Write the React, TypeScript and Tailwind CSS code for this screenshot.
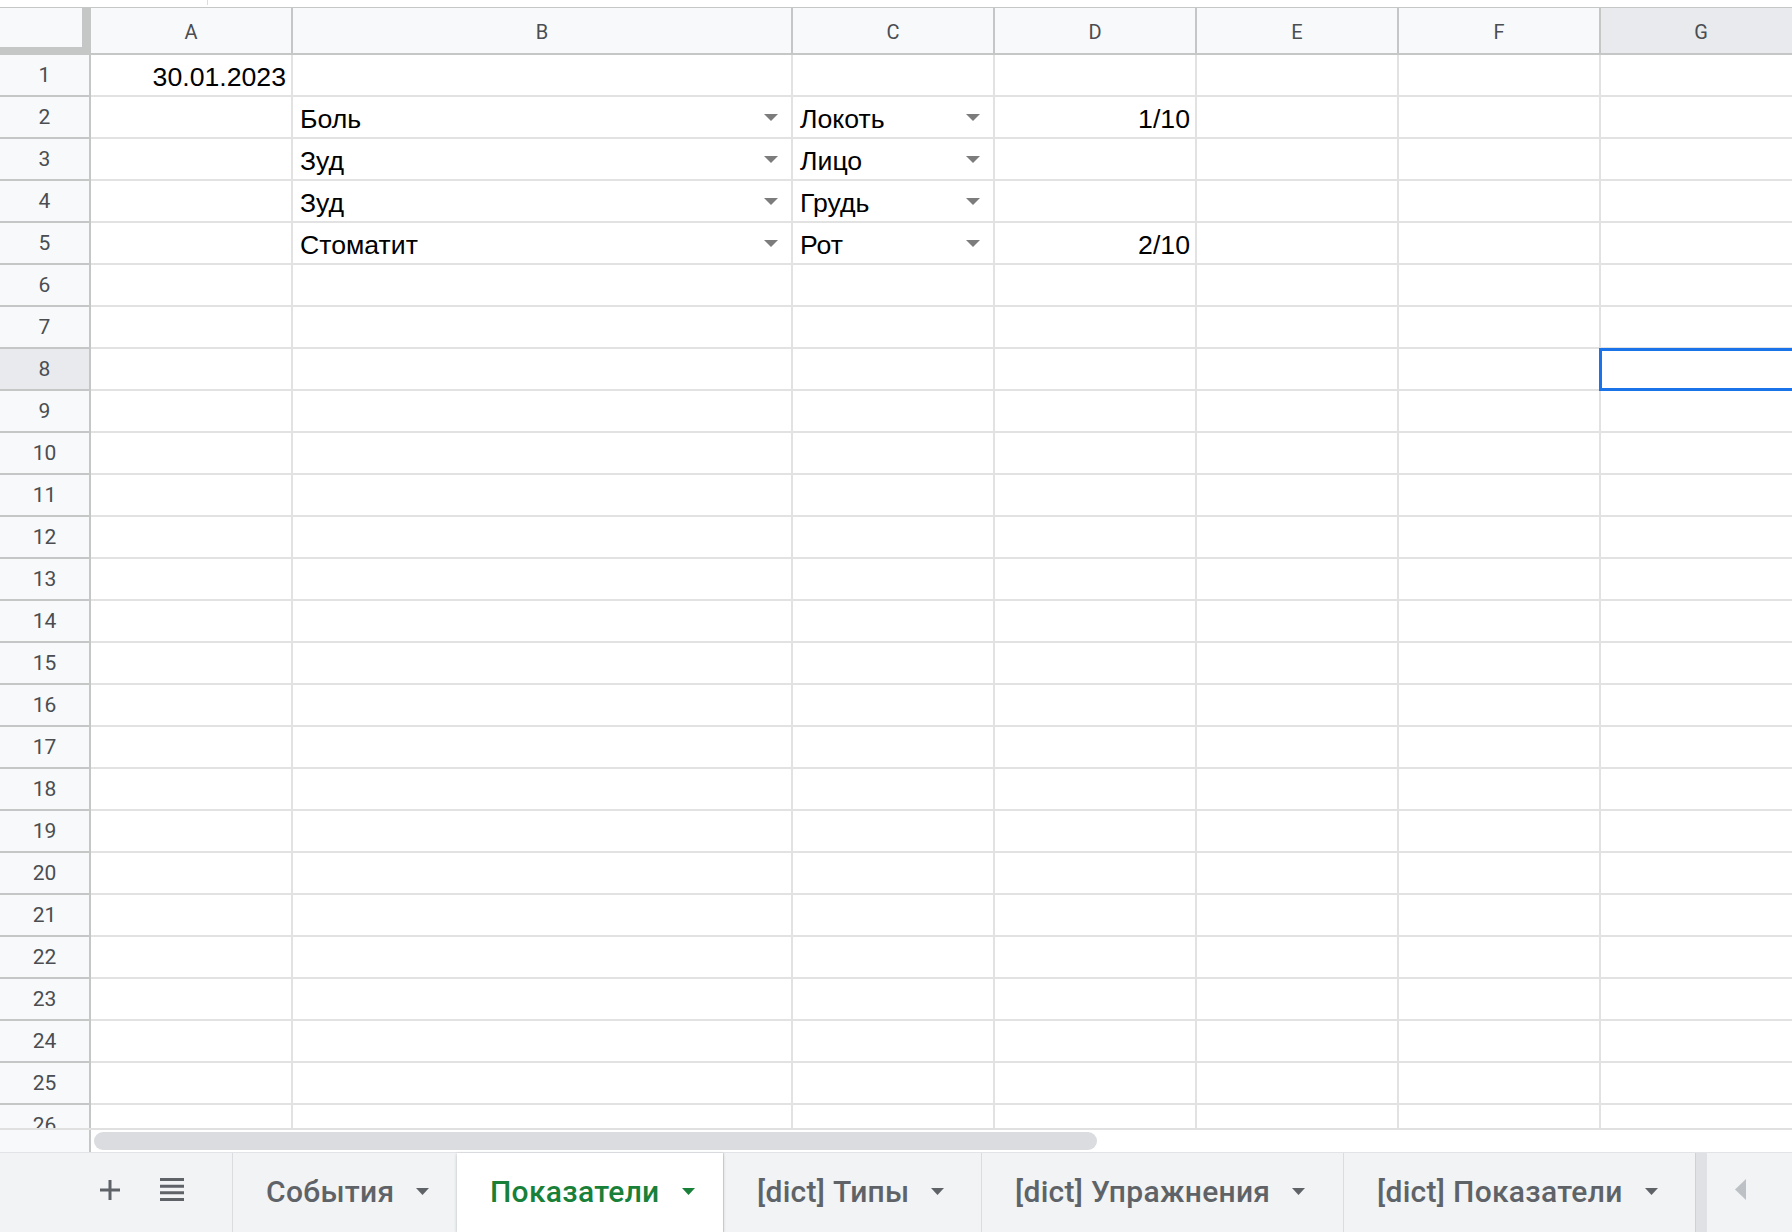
import React from "react";

const COLUMNS = [
  { id: "A", width: "w-[202px]" },
  { id: "B", width: "w-[500px]" },
  { id: "C", width: "w-[202px]" },
  { id: "D", width: "w-[202px]" },
  { id: "E", width: "w-[202px]" },
  { id: "F", width: "w-[202px]" },
  { id: "G", width: "w-[202px]" },
] as const;

type Cell = { text: string; align?: "left" | "right"; dropdown?: boolean };

const DATA: Record<number, Partial<Record<string, Cell>>> = {
  1: { A: { text: "30.01.2023", align: "right" } },
  2: {
    B: { text: "Боль", dropdown: true },
    C: { text: "Локоть", dropdown: true },
    D: { text: "1/10", align: "right" },
  },
  3: { B: { text: "Зуд", dropdown: true }, C: { text: "Лицо", dropdown: true } },
  4: { B: { text: "Зуд", dropdown: true }, C: { text: "Грудь", dropdown: true } },
  5: {
    B: { text: "Стоматит", dropdown: true },
    C: { text: "Рот", dropdown: true },
    D: { text: "2/10", align: "right" },
  },
};

const TABS = [
  { label: "События", width: "w-[225px]" },
  { label: "Показатели", width: "w-[266px]", active: true },
  { label: "[dict] Типы", width: "w-[258px]" },
  { label: "[dict] Упражнения", width: "w-[362px]" },
  { label: "[dict] Показатели", width: "w-[352px]" },
];

const SELECTED = { row: 8, col: "G" };

function Caret({ color, w = 12, h = 6 }: { color: string; w?: number; h?: number }) {
  return (
    <svg width={w} height={h} viewBox={`0 0 ${w} ${h}`} className="shrink-0">
      <path d={`M0 0h${w}L${w / 2} ${h}z`} fill={color} />
    </svg>
  );
}

function HeaderRow() {
  return (
    <div className="flex h-[47px] shrink-0">
      <div className="w-[91px] shrink-0 border-r-[9px] border-b-[8px] border-[#c4c7c5] bg-[#f8f9fa]" />
      {COLUMNS.map((col) => (
        <div
          key={col.id}
          className={`${col.width} shrink-0 flex items-center justify-center pt-[2px] border-r-2 border-b-2 border-[#c4c7c5] text-[20px] text-[#4a4d51] ${
            col.id === SELECTED.col ? "bg-[#e8eaed]" : "bg-[#f8f9fa]"
          }`}
        >
          {col.id}
        </div>
      ))}
    </div>
  );
}

function Row({ n }: { n: number }) {
  const cells = DATA[n] ?? {};
  return (
    <div className="flex h-[42px] shrink-0">
      <div
        className={`w-[91px] shrink-0 flex items-center justify-center pt-[2px] border-r-2 border-b-2 border-[#c4c7c5] text-[21px] text-[#4a4d51] ${
          n === SELECTED.row ? "bg-[#e8eaed]" : "bg-[#f8f9fa]"
        }`}
      >
        {n}
      </div>
      {COLUMNS.map((col) => {
        const cell = cells[col.id];
        const isSelected = n === SELECTED.row && col.id === SELECTED.col;
        return (
          <div
            key={col.id}
            className={`${col.width} shrink-0 relative flex items-end pl-[7px] pr-[5px] pb-[3px] border-r-2 border-b-2 border-[#e2e2e2] text-[26.67px] leading-[30px] text-black font-['Liberation_Sans',Arial,sans-serif] ${
              cell?.align === "right" ? "justify-end" : "justify-between"
            }`}
          >
            {cell && <span className="whitespace-nowrap">{cell.text}</span>}
            {cell?.dropdown && (
              <span className="self-center mr-[8px] mt-[3px] flex">
                <Caret color="#7c7c7c" w={14} h={7} />
              </span>
            )}
            {isSelected && (
              <div className="absolute -top-[1px] -left-[2px] -bottom-[2px] right-0 border-[3px] border-[#1a73e8]" />
            )}
          </div>
        );
      })}
    </div>
  );
}

export default function App() {
  const rows = Array.from({ length: 26 }, (_, i) => i + 1);

  return (
    <div className="w-[1792px] h-[1232px] overflow-hidden flex flex-col bg-white font-['Roboto',Arial,sans-serif]">
      {/* strip left of the toolbar */}
      <div className="relative h-[8px] shrink-0 border-b border-[#c4c7c5]">
        <div className="absolute left-[207px] top-0 h-[5px] w-px bg-[#dadce0]" />
      </div>

      <HeaderRow />

      {/* grid body */}
      <div className="h-[1073px] shrink-0 overflow-hidden flex flex-col">
        {rows.map((n) => (
          <Row key={n} n={n} />
        ))}
      </div>

      {/* horizontal scrollbar */}
      <div className="flex h-[24px] shrink-0 border-t-2 border-[#e0e0e0]">
        <div className="w-[91px] shrink-0 bg-[#f8f9fa] border-r-2 border-[#c4c7c5]" />
        <div className="flex-1 pl-[3px] pt-[2px]">
          <div className="h-[18px] w-[1003px] rounded-full bg-[#dadce0]" />
        </div>
      </div>

      {/* sheet tabs */}
      <div className="flex flex-1 border-t border-[#e1e3e6] bg-[#f1f3f4]">
        <div className="w-[232px] shrink-0 flex items-center pb-[6px]">
          <svg width="20" height="20" viewBox="0 0 20 20" className="ml-[100px]">
            <path d="M10 0v20M0 10h20" stroke="#5f6368" strokeWidth="3" />
          </svg>
          <svg width="24" height="23" viewBox="0 0 24 23" className="ml-[40px]">
            <path d="M0 1.5h24M0 8.2h24M0 14.8h24M0 21.5h24" stroke="#5f6368" strokeWidth="3" />
          </svg>
        </div>

        {TABS.map((tab) => (
          <div
            key={tab.label}
            className={`${tab.width} shrink-0 flex items-center gap-[22px] pl-[33px] pb-[2px] text-[30px] tracking-[0.3px] font-medium whitespace-nowrap ${
              tab.active
                ? "bg-white text-[#188038] shadow-[0_1px_3px_rgba(60,64,67,0.3)] relative"
                : "border-l border-[#dadce0] text-[#5f6368]"
            }`}
          >
            <span>{tab.label}</span>
            <Caret color={tab.active ? "#188038" : "#5f6368"} w={13} h={7} />
          </div>
        ))}

        <div className="w-[12px] shrink-0 border-l border-[#cfd1d4] bg-[#dfe1e4]" />
        <div className="flex-1 flex items-center pl-[28px] pb-[6px]">
          <svg width="11" height="21" viewBox="0 0 11 21">
            <path d="M11 0v21L0 10.5z" fill="#bdc1c6" />
          </svg>
        </div>
      </div>
    </div>
  );
}
